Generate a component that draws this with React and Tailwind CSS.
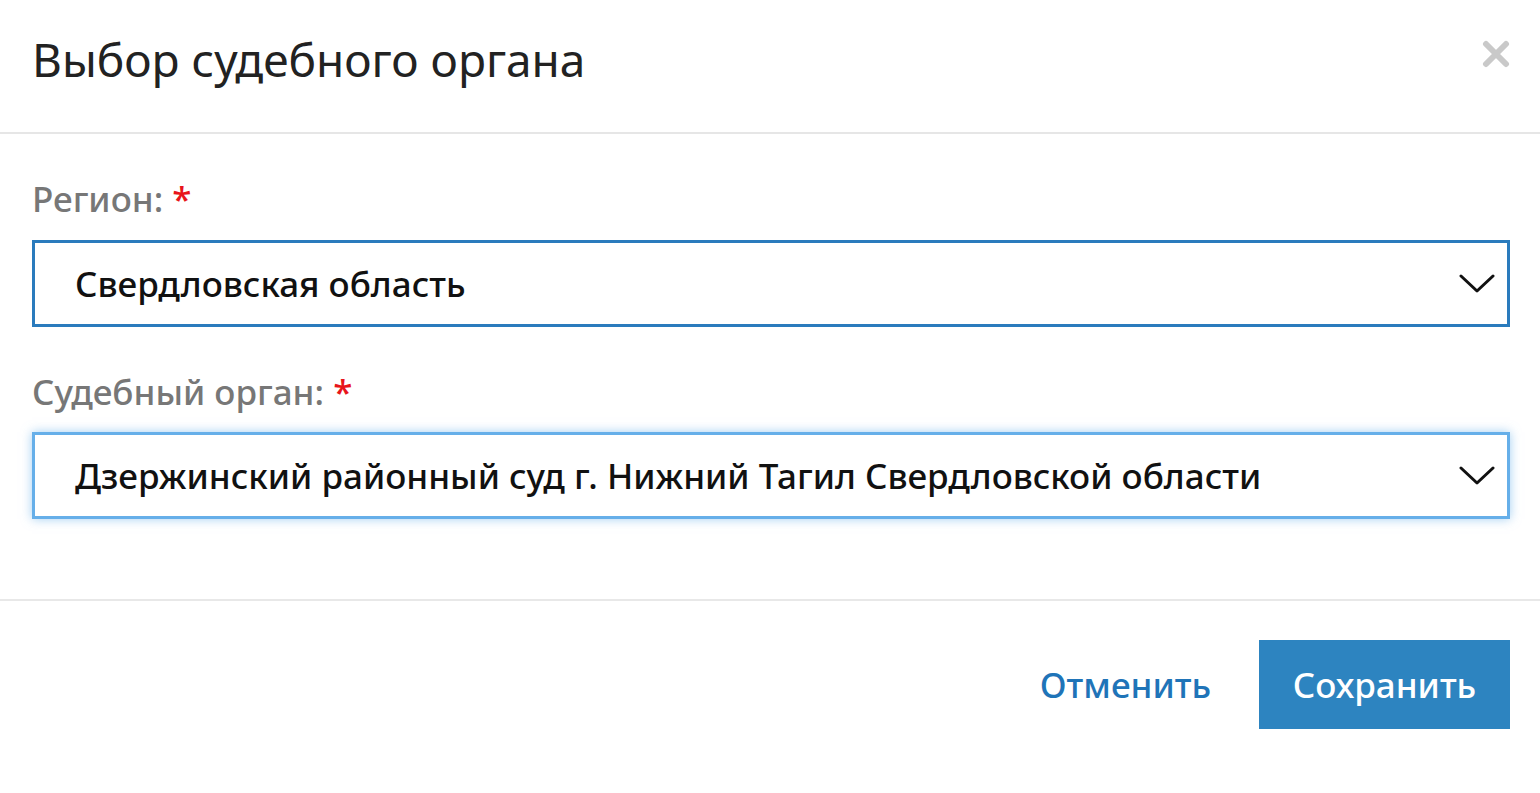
import React from "react";

const font = { fontFamily: '"Noto Sans", "Open Sans", sans-serif' };

const Chevron = () => (
  <svg width="36" height="20" viewBox="0 0 36 20" fill="none" className="shrink-0">
    <polyline points="2,2 18,17 34,2" stroke="#111" strokeWidth="3" strokeLinecap="round" strokeLinejoin="round" />
  </svg>
);

const Field = ({ label, value, focused }) => (
  <div className="flex flex-col">
    <label className="text-[35px] leading-[40px] text-[#777] font-medium">
      {label}: <span className="text-[#e8151b]">*</span>
    </label>
    <div
      className={
        focused
          ? "mt-[20px] h-[87px] flex items-center justify-between border-[3px] border-[#66afe9] shadow-[0_0_10px_rgba(102,175,233,0.6)] pl-[40px] pr-[12px] bg-white"
          : "mt-[21px] h-[87px] flex items-center justify-between border-[3px] border-[#2a7bbd] pl-[40px] pr-[12px] bg-white"
      }
    >
      <span className="text-[35px] leading-[40px] text-[#111] font-medium">{value}</span>
      <Chevron />
    </div>
  </div>
);

export default function App() {
  return (
    <div className="w-[1540px] h-[793px] bg-white flex flex-col overflow-hidden" style={font}>
      {/* header */}
      <div className="h-[134px] flex items-start justify-between pl-[32px] pr-[30px] pt-[33px] border-b-2 border-[#e6e6e6]">
        <h1 className="text-[46px] leading-[52px] text-[#222]">Выбор судебного органа</h1>
        <button className="mt-[7px]">
          <svg width="28" height="28" viewBox="0 0 28 28">
            <path d="M4 4 L24 24 M24 4 L4 24" stroke="#c9c9c9" strokeWidth="6" strokeLinecap="round" />
          </svg>
        </button>
      </div>

      {/* body */}
      <div className="flex flex-col gap-[45px] pl-[32px] pr-[30px] pt-[45px] pb-[80px] border-b-2 border-[#e8e8e8]">
        <Field label="Регион" value="Свердловская область" />
        <Field label="Судебный орган" value="Дзержинский районный суд г. Нижний Тагил Свердловской области" focused />
      </div>

      {/* footer */}
      <div className="flex items-center justify-end gap-[48px] pr-[30px] pt-[39px]">
        <button className="text-[35px] leading-[40px] text-[#1f74b8] font-medium">Отменить</button>
        <button className="w-[251px] h-[89px] bg-[#2d84c0] text-white text-[35px] leading-[40px] font-medium">
          Сохранить
        </button>
      </div>
    </div>
  );
}
